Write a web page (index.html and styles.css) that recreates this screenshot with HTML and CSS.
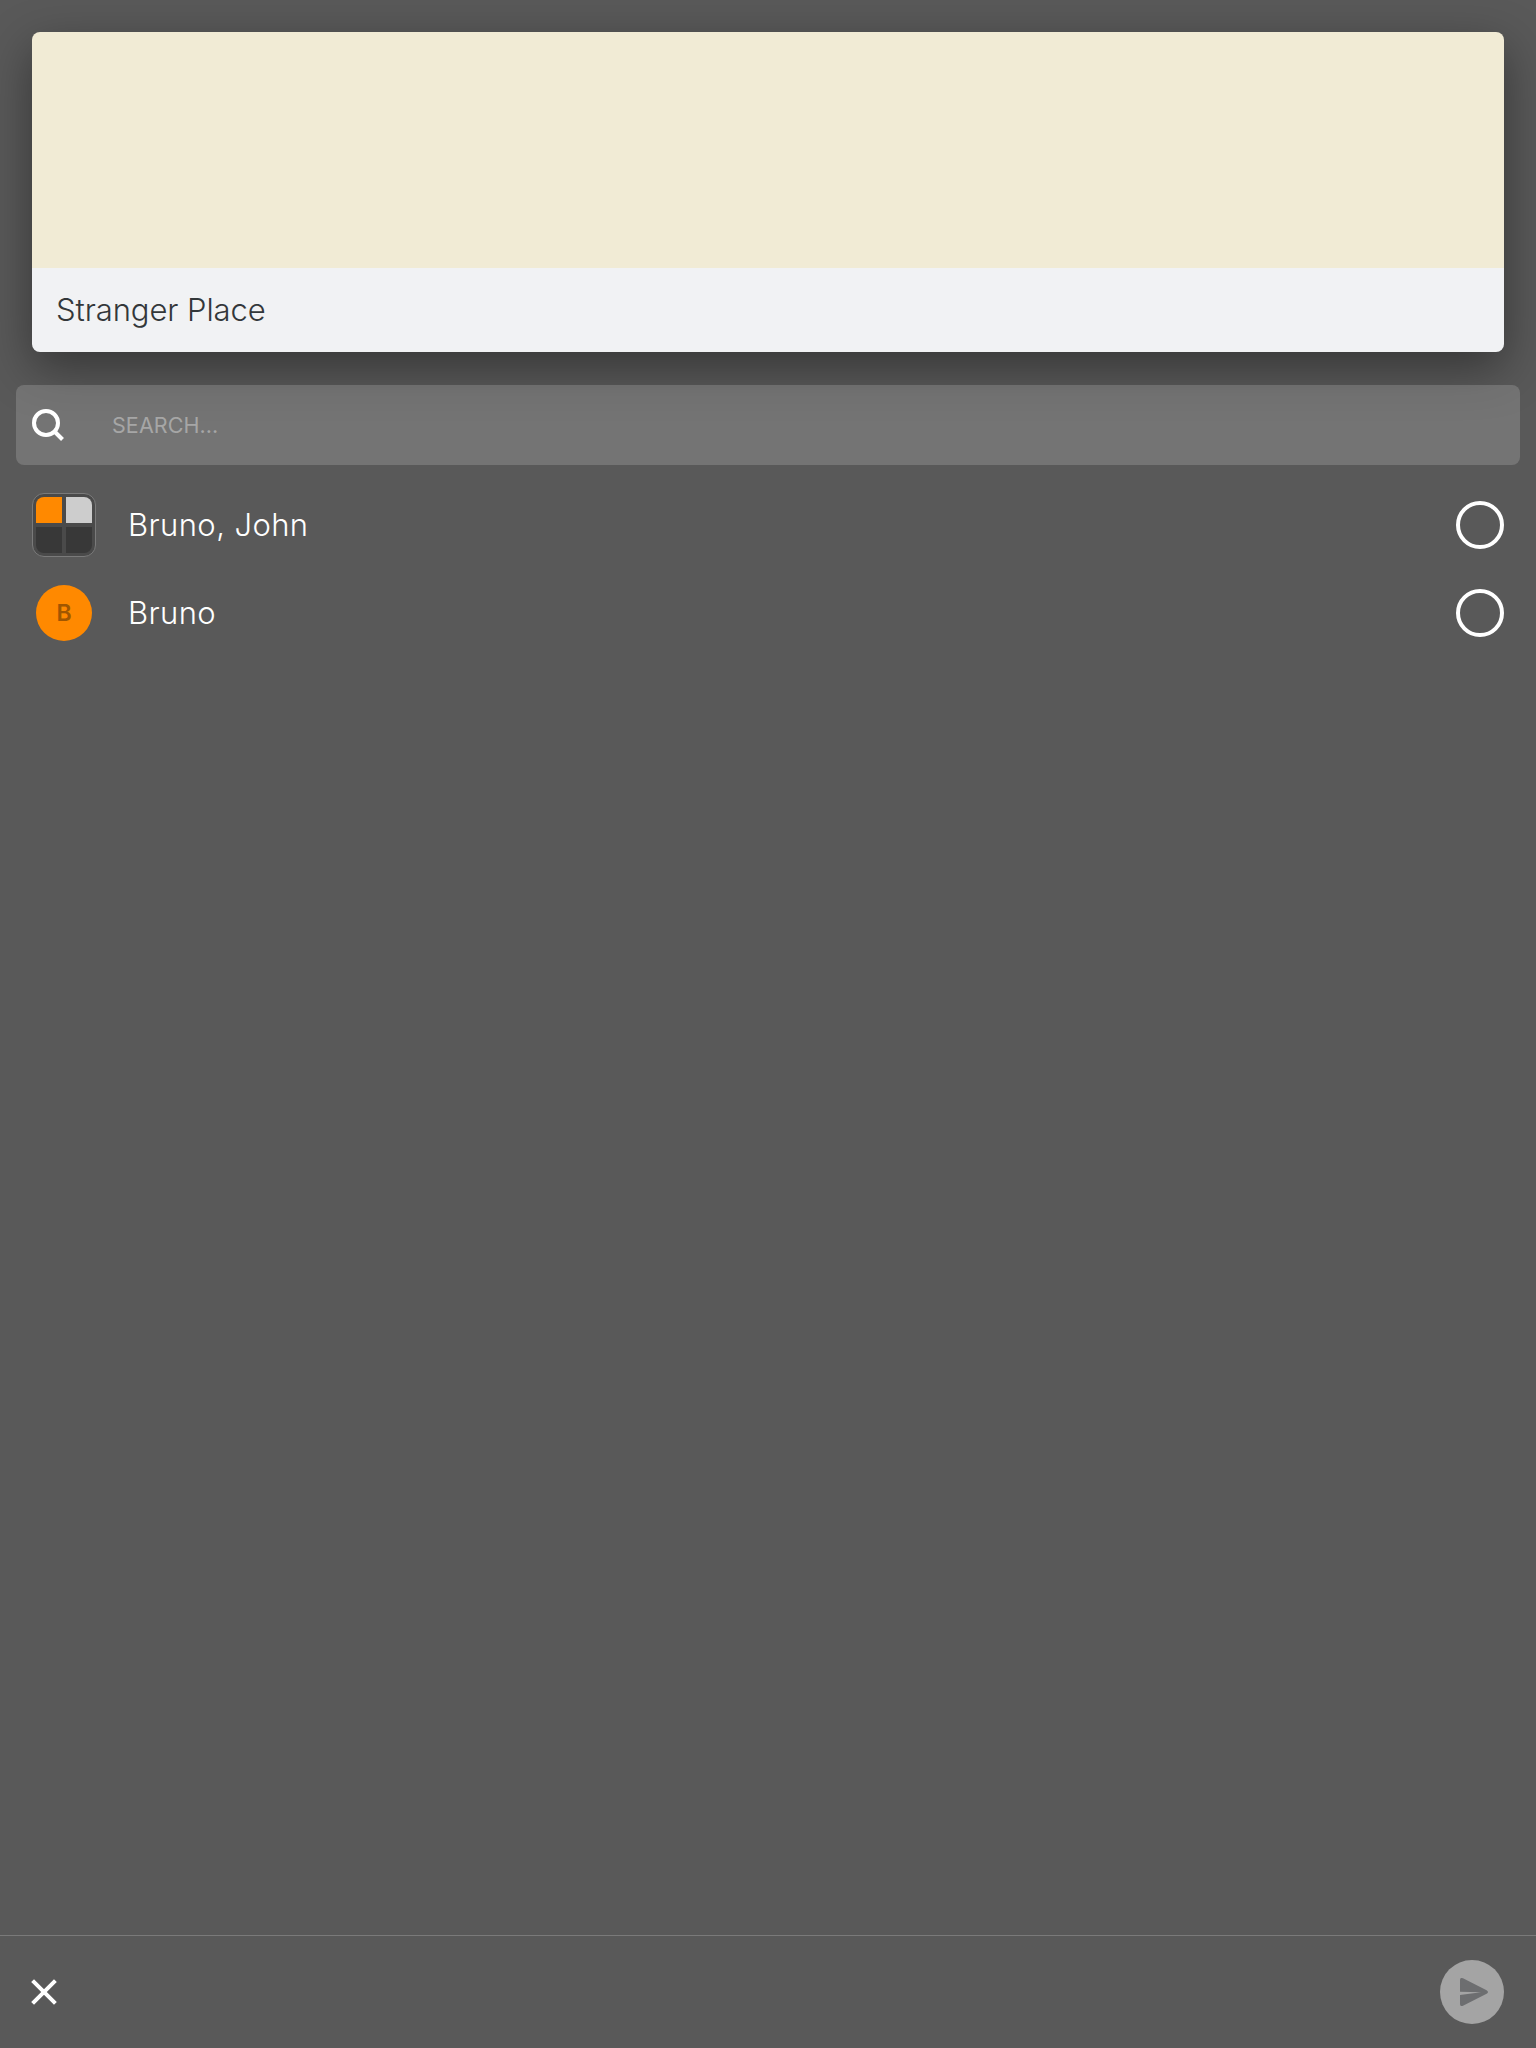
FILE: index.html
```html
<!DOCTYPE html>
<html lang="en">
<head>
<meta charset="utf-8">
<title>Share</title>
<link rel="stylesheet" href="styles.css">
</head>
<body>
<main class="share">
  <section class="card">
    <div class="card-map"></div>
    <div class="card-caption"><span class="place">Stranger Place</span></div>
  </section>
  <div class="search">
    <svg class="search-icon" width="32" height="32" viewBox="0 0 32 32" fill="none" stroke="#fff" stroke-width="4">
      <circle cx="14" cy="14" r="12"/>
      <path d="M22.5 22.5L30.5 30.5"/>
    </svg>
    <span class="search-hint">SEARCH...</span>
  </div>
  <ul class="people">
    <li class="person">
      <div class="group"><i class="tile orange"></i><i class="tile light"></i><i class="tile"></i><i class="tile"></i></div>
      <span class="name">Bruno, John</span>
      <span class="check"></span>
    </li>
    <li class="person">
      <div class="avatar"><span>B</span></div>
      <span class="name">Bruno</span>
      <span class="check"></span>
    </li>
  </ul>
  <footer class="bar">
    <svg width="26" height="26" viewBox="0 0 26 26" stroke="#fff" stroke-width="4"><path d="M1.6 1.6L24.4 24.4M24.4 1.6L1.6 24.4"/></svg>
    <div class="send">
      <svg width="28" height="28" viewBox="0 0 28 28" fill="#6d6e70"><path d="M0 13.8V2Q0-.8 3 .3L26.6 12.2Q29.4 14 26.6 15.8L3 27.7Q0 28.8 0 26V17L21 14.2Z"/></svg>
    </div>
  </footer>
</main>
</body>
</html>
```
FILE: styles.css
```css
* { box-sizing: border-box; }
body { margin: 0; background: #595959; font-family: Inter, "Liberation Sans", sans-serif; }
.share { height: 2048px; display: flex; flex-direction: column; overflow: hidden; }
.card { margin: 32px 32px 0; height: 320px; flex: none; border-radius: 8px; display: flex; flex-direction: column; box-shadow: 0 16px 48px rgba(0, 0, 0, .4); }
.card-map { height: 236px; background: #f1ebd5; border-radius: 8px 8px 0 0; }
.card-caption { flex: 1; display: flex; align-items: center; padding-left: 24px; background: #f1f2f4; border-radius: 0 0 8px 8px; }
.place { font-size: 31px; font-weight: 300; line-height: 40px; color: #33373a; letter-spacing: -.08px; }
.search { margin: 33px 16px 0; height: 80px; flex: none; display: flex; align-items: center; gap: 48px; padding: 0 16px; border-radius: 8px; background: rgba(255, 255, 255, .165); }
.search-hint { font-size: 21.5px; line-height: 30px; color: #a6a6a6; letter-spacing: .08px; }
.people { list-style: none; margin: 16px 0 0; padding: 0; flex: 1; }
.person { height: 88px; display: flex; align-items: center; padding: 0 32px; }
.group { width: 64px; height: 64px; border: 1px solid #7a7a7a; border-radius: 12px; background: #4a4a4a; padding: 3px; display: grid; grid-template-columns: 26px 26px; grid-template-rows: 26px 26px; gap: 4px; }
.tile { background: #383838; }
.tile.orange { background: #ff8900; }
.tile.light { background: #cdcdcd; }
.tile:nth-child(1) { border-top-left-radius: 8px; }
.tile:nth-child(2) { border-top-right-radius: 8px; }
.tile:nth-child(3) { border-bottom-left-radius: 8px; }
.tile:nth-child(4) { border-bottom-right-radius: 8px; }
.avatar { width: 56px; height: 56px; margin: 0 4px; border-radius: 50%; background: #ff8900; color: #a05600; font-size: 23px; font-weight: 600; display: flex; align-items: center; justify-content: center; }
.name { flex: 1; margin-left: 32px; font-size: 31px; font-weight: 300; line-height: 40px; color: #fff; letter-spacing: .4px; }
.check { width: 48px; height: 48px; border: 4px solid #fff; border-radius: 50%; }
.bar { height: 113px; flex: none; border-top: 1px solid #7a7a7a; display: flex; align-items: center; justify-content: space-between; padding: 0 32px 0 31px; }
.send { width: 64px; height: 64px; border-radius: 50%; background: #a4a4a4; display: flex; align-items: center; padding-left: 20px; }
```
